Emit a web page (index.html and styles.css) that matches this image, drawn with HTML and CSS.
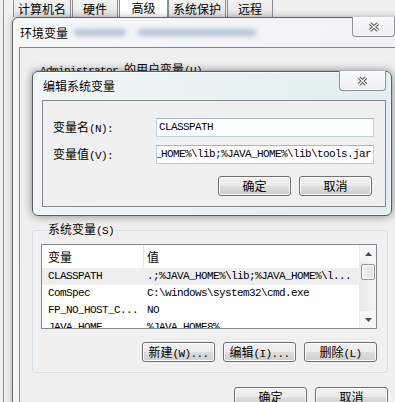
FILE: index.html
```html
<!DOCTYPE html>
<html lang="zh-CN">
<head>
    <meta charset="UTF-8">
    <meta name="viewport" content="width=device-width, initial-scale=1.0">
    <title>编辑系统变量</title>
    <link rel="stylesheet" href="styles.css">
</head>
<body>
    <!-- 系统属性窗口（背景） -->
    <div class="sysprops">
        <div class="tabs">
            <div class="tab">计算机名</div>
            <div class="tab">硬件</div>
            <div class="tab active">高级</div>
            <div class="tab">系统保护</div>
            <div class="tab">远程</div>
        </div>
    </div>

    <!-- 环境变量窗口 -->
    <div class="window env">
        <div class="titlebar">
            <span class="title">环境变量</span>
            <span class="haze haze-a"></span>
            <span class="haze haze-b"></span>
            <button class="close" aria-label="关闭">
                <svg width="12" height="10" viewBox="0 0 12 10"><path d="M2 1.5L10 8.5M10 1.5L2 8.5" stroke="#5c5c5c" stroke-width="3.4"/><path d="M2 1.5L10 8.5M10 1.5L2 8.5" stroke="#f4f4f4" stroke-width="1.3"/></svg>
            </button>
        </div>
        <div class="client">
            <fieldset class="group user-vars">
                <legend><span class="en">Administrator </span>的用户变量<span class="en">(U)</span></legend>
            </fieldset>
            <fieldset class="group sys-vars">
                <legend>系统变量<span class="en">(S)</span></legend>
                <div class="list">
                    <div class="table">
                        <div class="row head">
                            <div class="cell name">变量</div>
                            <div class="cell val">值</div>
                        </div>
                        <div class="row selected">
                            <div class="cell name">CLASSPATH</div>
                            <div class="cell val">.;%JAVA_HOME%\lib;%JAVA_HOME%\l...</div>
                        </div>
                        <div class="row">
                            <div class="cell name">ComSpec</div>
                            <div class="cell val">C:\windows\system32\cmd.exe</div>
                        </div>
                        <div class="row">
                            <div class="cell name">FP_NO_HOST_C...</div>
                            <div class="cell val">NO</div>
                        </div>
                        <div class="row">
                            <div class="cell name">JAVA_HOME</div>
                            <div class="cell val">%JAVA_HOME8%</div>
                        </div>
                    </div>
                    <div class="scrollbar">
                        <div class="arrow"><svg width="7" height="4" viewBox="0 0 7 4"><path d="M0 4L3.5 0L7 4Z" fill="#4a4a4a"/></svg></div>
                        <div class="thumb"></div>
                        <div class="track"></div>
                        <div class="arrow"><svg width="7" height="4" viewBox="0 0 7 4"><path d="M0 0L3.5 4L7 0Z" fill="#4a4a4a"/></svg></div>
                    </div>
                </div>
                <div class="buttons">
                    <button class="btn">新建<span class="en">(W)...</span></button>
                    <button class="btn">编辑<span class="en">(I)...</span></button>
                    <button class="btn">删除<span class="en">(L)</span></button>
                </div>
            </fieldset>
            <div class="buttons footer">
                <button class="btn">确定</button>
                <button class="btn">取消</button>
            </div>
        </div>
    </div>

    <!-- 编辑系统变量对话框 -->
    <div class="window edit">
        <div class="titlebar">
            <span class="title">编辑系统变量</span>
            <button class="close" aria-label="关闭">
                <svg width="11" height="10" viewBox="0 0 11 10"><path d="M2 1.5L9 8.5M9 1.5L2 8.5" stroke="#5c5c5c" stroke-width="3.2"/><path d="M2 1.5L9 8.5M9 1.5L2 8.5" stroke="#f4f4f4" stroke-width="1.2"/></svg>
            </button>
        </div>
        <div class="client">
            <div class="field">
                <label>变量名<span class="en">(N):</span></label>
                <div class="input">CLASSPATH</div>
            </div>
            <div class="field">
                <label>变量值<span class="en">(V):</span></label>
                <div class="input end"><span>_HOME%\lib;%JAVA_HOME%\lib\tools.jar</span></div>
            </div>
            <div class="buttons">
                <button class="btn">确定</button>
                <button class="btn">取消</button>
            </div>
        </div>
    </div>
</body>
</html>
```

FILE: styles.css
```css
* {
    box-sizing: border-box;
}
body {
    margin: 0;
    width: 395px;
    height: 402px;
    overflow: hidden;
    position: relative;
    background: #f0f0f0;
    font-family: "Noto Sans CJK SC", sans-serif;
    font-size: 12px;
    line-height: 14px;
    color: #000;
}
.en {
    font-family: "Liberation Mono", monospace;
    font-size: 11px;
    letter-spacing: -0.6px;
}

/* 系统属性 */
.sysprops {
    height: 402px;
    margin-left: 3px;
    padding-left: 9px;
    border-left: 1px solid #8e9095;
}
.tabs {
    display: flex;
    gap: 1px;
    height: 17px;
}
.tab {
    min-width: 46px;
    height: 17px;
    padding: 0 4px;
    text-align: center;
    line-height: 17px;
    border: 1px solid #898c95;
    border-top: none;
    border-bottom: none;
    background: linear-gradient(#f3f3f3, #e2e2e2);
}
.tab.active {
    min-width: 49px;
    margin-right: -1px;
    line-height: 15px;
    background: #fff;
}

/* 通用窗口 */
.window {
    position: absolute;
    display: flex;
    flex-direction: column;
}
.titlebar {
    display: flex;
    align-items: center;
    flex-shrink: 0;
}
.title {
    margin-left: 1px;
    text-shadow: 0 0 6px #fff, 0 0 3px #fff;
}
.close {
    align-self: flex-start;
    margin-left: auto;
    margin-top: -1px;
    padding: 0;
    display: flex;
    align-items: center;
    justify-content: center;
    border: 1px solid #8b8d90;
    border-top: none;
    border-radius: 0 0 4px 4px;
    background: linear-gradient(#fafbfb, #eceff1);
    box-shadow: inset 0 0 0 1px rgba(255,255,255,0.7);
}
.client {
    border: 1px solid #858585;
    background: #f0f0f0;
}

/* 环境变量窗口 */
.env {
    left: 12px;
    top: 17px;
    width: 400px;
    height: 400px;
    padding: 0 6px;
    border: 1px solid #5f6163;
    border-radius: 6px 6px 0 0;
    background: linear-gradient(110deg, #f5f7f8, #eef1f3);
    box-shadow: 0 0 6px rgba(0,0,0,0.3);
}
.env .titlebar {
    height: 29px;
}
.env .close {
    width: 43px;
    height: 20px;
    margin-right: 10px;
}
.haze {
    height: 7px;
    background: #7f97bd;
    opacity: 0.55;
    filter: blur(2.5px);
    border-radius: 3px;
}
.haze-a {
    width: 52px;
    margin-left: 6px;
}
.haze-b {
    width: 118px;
    margin-left: 12px;
}
.env .client {
    flex: 1;
}

fieldset.group {
    margin: 0 0 0 12px;
    padding: 0;
    width: 356px;
    min-width: 0;
    border: 1px solid #d5dfe5;
    border-radius: 3px;
}
.group legend {
    margin-left: 6px;
    padding: 0 1px;
    line-height: 14px;
}
.user-vars {
    margin-top: 14px !important;
    height: 149px;
}
.sys-vars {
    margin-top: 11px !important;
    padding: 6px 10px 10px 8px !important;
}

.list {
    display: flex;
    width: 336px;
    height: 85px;
    border: 1px solid #828790;
    background: #fff;
}
.table {
    flex: 1;
    overflow: hidden;
}
.row {
    display: flex;
    height: 17px;
    line-height: 17px;
    white-space: nowrap;
    font-family: "Liberation Mono", monospace;
    font-size: 11px;
    letter-spacing: -0.6px;
}
.row.head {
    height: 23px;
    line-height: 23px;
    font-family: "Noto Sans CJK SC", sans-serif;
    font-size: 12px;
    letter-spacing: 0;
}
.row.selected {
    background: #eeeeee;
}
.cell.name {
    width: 101px;
    padding-left: 6px;
    flex-shrink: 0;
}
.cell.val {
    padding-left: 4px;
}
.head .cell.val {
    padding-left: 3px;
    border-left: 1px solid #e5e5e5;
}
.scrollbar {
    width: 17px;
    display: flex;
    flex-direction: column;
    background: linear-gradient(90deg, #e9e9e9, #f5f5f5);
    border-left: 1px solid #ececec;
}
.arrow {
    height: 17px;
    display: flex;
    align-items: center;
    justify-content: center;
    background: #f7f7f7;
}
.thumb {
    height: 16px;
    margin: 2px 1px 0;
    border: 1px solid #9a9a9a;
    border-radius: 2px;
    background: linear-gradient(90deg, #f3f3f3, #e2e2e2);
    box-shadow: inset 0 0 0 1px #fbfbfb;
}
.track {
    flex: 1;
}

.buttons {
    display: flex;
    justify-content: flex-end;
    gap: 8px;
}
.sys-vars .buttons {
    margin-top: 13px;
    margin-right: 0;
}
.footer {
    width: 356px;
    margin: 14px 0 0 12px;
}
.btn {
    width: 73px;
    height: 20px;
    padding: 0;
    font: inherit;
    line-height: 18px;
    color: #000;
    border: 1px solid #707070;
    border-radius: 3px;
    background: linear-gradient(#f2f2f2 0%, #ebebeb 49%, #dddddd 50%, #cfcfcf 100%);
    box-shadow: inset 0 0 0 1px #fbfbfb;
}

/* 编辑系统变量 */
.edit {
    left: 32px;
    top: 71px;
    width: 360px;
    height: 145px;
    padding: 0 5px 8px 9px;
    border: 1px solid #5a5c5e;
    border-radius: 6px;
    background: linear-gradient(100deg, #f1f5f7, #e1eef0);
    box-shadow: 0 0 10px rgba(0,0,0,0.45), inset 0 0 0 1px rgba(255,255,255,0.6);
}
.edit .titlebar {
    height: 28px;
}
.edit .close {
    width: 47px;
    height: 20px;
}
.edit .client {
    height: 108px;
    padding: 17px 11px 0 10px;
}
.field {
    display: flex;
    align-items: center;
    height: 19px;
}
.field + .field {
    margin-top: 8px;
}
.field label {
    width: 103px;
}
.input {
    width: 218px;
    height: 19px;
    padding: 0 2px;
    overflow: hidden;
    white-space: nowrap;
    line-height: 17px;
    font-family: "Liberation Mono", monospace;
    font-size: 11px;
    letter-spacing: -0.6px;
    background: #fff;
    border: 1px solid #bcd0e2;
    border-top-color: #a3b6ca;
}
.input.end {
    display: flex;
    justify-content: flex-end;
}
.input.end span {
    flex-shrink: 0;
}
.edit .buttons {
    margin-top: 12px;
    margin-right: 2px;
}
```
